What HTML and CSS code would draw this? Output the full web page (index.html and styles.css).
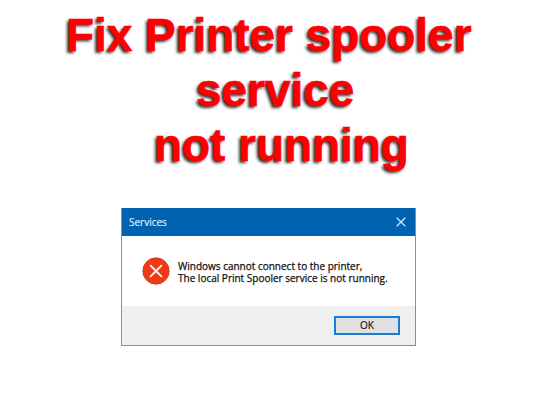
FILE: index.html
```
<!DOCTYPE html>
<html lang="en">
<head>
    <meta charset="UTF-8">
    <meta name="viewport" content="width=device-width, initial-scale=1.0">
    <title>Fix Printer spooler service not running</title>
    <link rel="stylesheet" href="styles.css">
</head>
<body>
    <h1 class="headline">
        <span class="line line-first">Fix Printer spooler</span>
        <span class="line line-second">service</span>
        <span class="line line-third">not running</span>
    </h1>

    <div class="dialog">
        <div class="title-bar">
            <span class="title">Services</span>
            <svg class="close-icon" viewBox="0 0 10 10">
                <path d="M0.7 0.7L9.3 9.3M9.3 0.7L0.7 9.3"/>
            </svg>
        </div>
        <div class="content">
            <svg class="error-icon" viewBox="0 0 28 28">
                <circle cx="14" cy="14" r="13.2"/>
                <path d="M8.1 8.1L19.9 19.9M19.9 8.1L8.1 19.9"/>
            </svg>
            <p class="message">
                Windows cannot connect to the printer,<br>
                The local Print Spooler service is not running.
            </p>
        </div>
        <div class="footer">
            <button class="ok-btn">OK</button>
        </div>
    </div>
</body>
</html>
```

FILE: styles.css
```
:root {
    --title-blue: #0063b1;
    --border-color: #4f9ddb;
    --headline-red: #ff0000;
}

* {
    box-sizing: border-box;
    margin: 0;
    padding: 0;
}

body {
    font-family: "Open Sans", "Noto Sans", sans-serif;
    background: white;
    height: 401px;
    overflow: hidden;
}

/* Headline */
.headline {
    height: 208px;
    padding-top: 8px;
    font-family: "Liberation Sans", Arial, sans-serif;
    font-size: 46px;
    font-weight: bold;
    line-height: 55px;
    letter-spacing: -0.05px;
    color: var(--headline-red);
    -webkit-text-stroke: 0.6px var(--headline-red);
    text-shadow: -2px 2px 3px rgba(0, 0, 0, 0.8);
}

.line {
    display: block;
    white-space: nowrap;
}

.line-first {
    padding-left: 66px;
}

.line-second {
    padding-left: 196px;
}

.line-third {
    padding-left: 154px;
}

/* Dialog */
.dialog {
    width: 295px;
    height: 138px;
    margin-left: 121px;
    border: 1px solid var(--border-color);
    border-top: none;
    background: white;
    display: flex;
    flex-direction: column;
}

.title-bar {
    height: 28px;
    padding: 0 9px 0 7px;
    background: var(--title-blue);
    display: flex;
    align-items: center;
    justify-content: space-between;
}

.title {
    font-size: 10px;
    color: #dceaf6;
    -webkit-text-stroke: 0.2px #dceaf6;
}

.close-icon {
    width: 10px;
    height: 10px;
    fill: none;
    stroke: #d5e6f4;
    stroke-width: 1.3;
}

.content {
    flex: 1;
    padding: 21px 0 0 20px;
    display: flex;
    align-items: flex-start;
}

.error-icon {
    width: 28px;
    height: 28px;
    margin-right: 8px;
}

.error-icon circle {
    fill: #f03a17;
    stroke: #c9351c;
    stroke-width: 0.8;
}

.error-icon path {
    fill: none;
    stroke: white;
    stroke-width: 1.8;
}

.message {
    padding-top: 3px;
    font-size: 10px;
    line-height: 12px;
    color: #111;
    -webkit-text-stroke: 0.25px #111;
    white-space: nowrap;
}

.footer {
    height: 39px;
    padding: 10px 15px 0 0;
    background: #efefef;
    display: flex;
    justify-content: flex-end;
}

.ok-btn {
    width: 66px;
    height: 19px;
    border: 2px solid #187cd9;
    background: #e1e1e1;
    font-family: inherit;
    font-size: 10px;
    line-height: 15px;
    color: #1c1c1c;
    -webkit-text-stroke: 0.2px #1c1c1c;
}
```
